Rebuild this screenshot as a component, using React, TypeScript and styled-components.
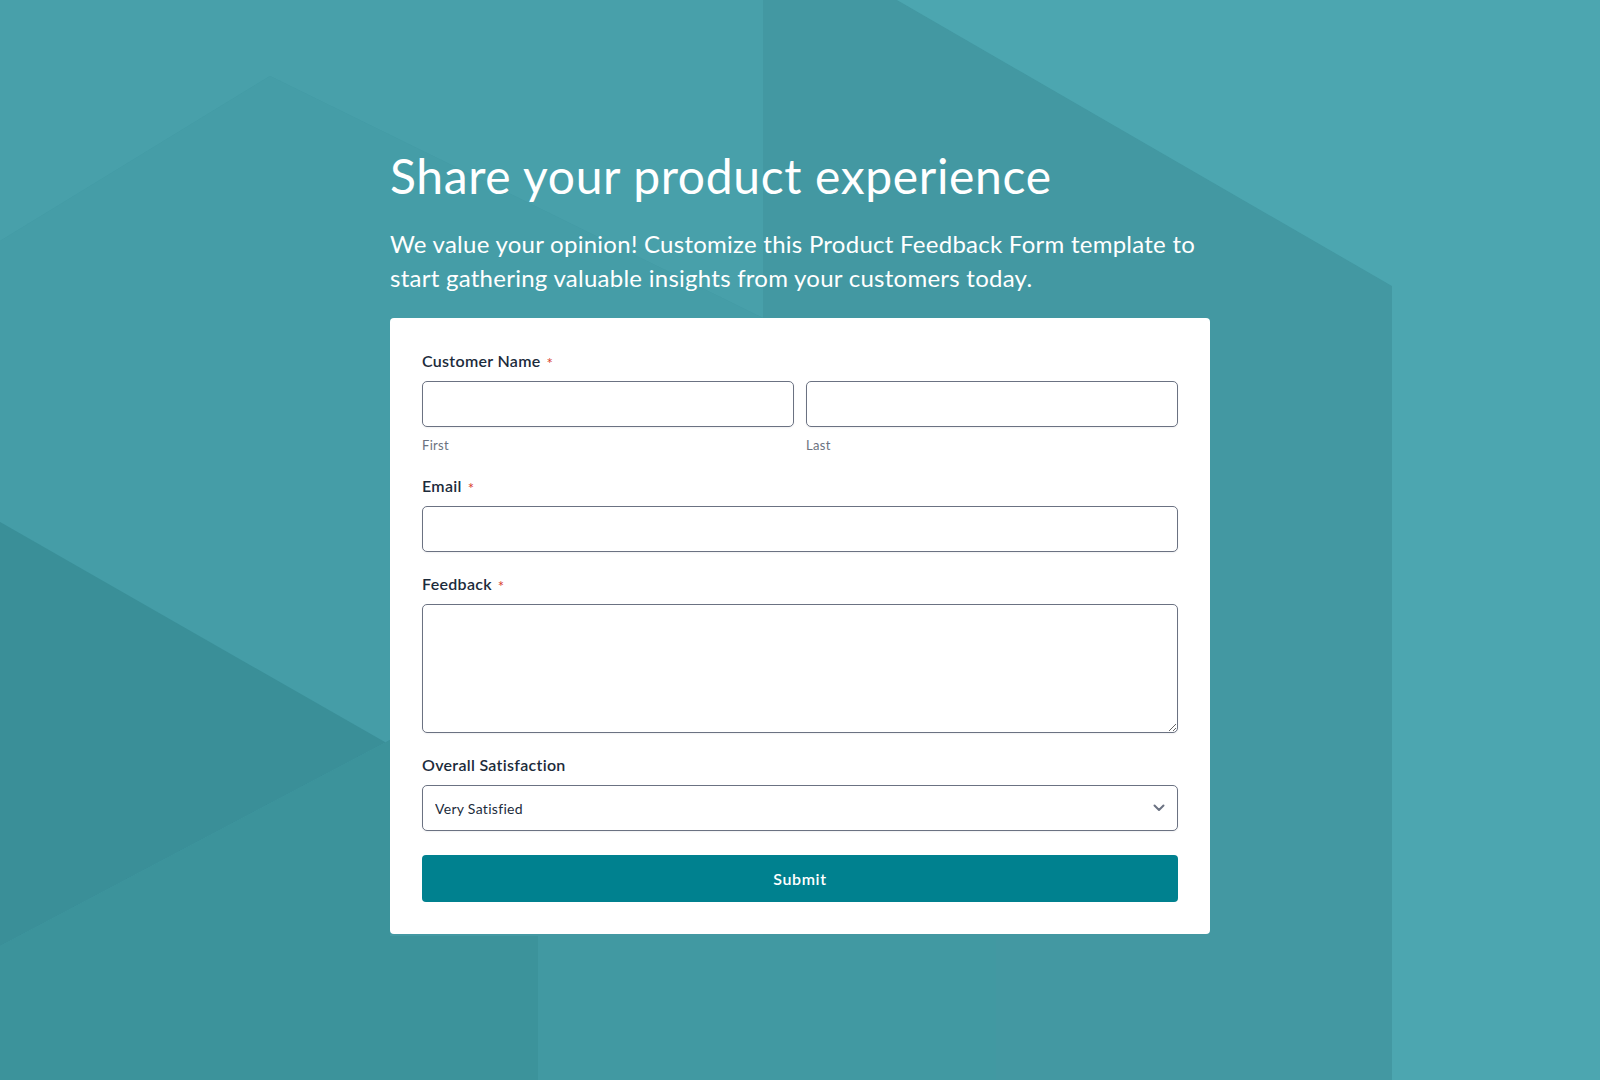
import React from "react";
import styled, { createGlobalStyle } from "styled-components";

const GlobalStyle = createGlobalStyle`
  html, body {
    margin: 0;
    padding: 0;
    background: #4499a3;
  }
  body {
    font-family: Lato, "Open Sans", sans-serif;
    -webkit-font-smoothing: antialiased;
  }
  * { box-sizing: border-box; }
`;

const Page = styled.div`
  position: relative;
  min-height: 1080px;
  width: 100%;
  overflow: hidden;
`;

const Backdrop = styled.svg`
  position: absolute;
  inset: 0;
  width: 100%;
  height: 100%;
  z-index: 0;
`;

const Content = styled.main`
  position: relative;
  z-index: 1;
  width: 820px;
  margin: 0 auto;
  padding-top: 147px;
  display: flex;
  flex-direction: column;
`;

const Title = styled.h1`
  margin: 0;
  font-family: Lato, sans-serif;
  font-weight: 400;
  font-size: 48px;
  line-height: 1.2;
  letter-spacing: 0.65px;
  color: #ffffff;
`;

const Lead = styled.p`
  margin: 22px 0 23px;
  font-family: Lato, sans-serif;
  font-weight: 400;
  font-size: 24px;
  line-height: 34px;
  letter-spacing: 0.26px;
  color: #ffffff;
`;

const Card = styled.form`
  background: #ffffff;
  border-radius: 4px;
  padding: 32px;
  display: flex;
  flex-direction: column;
  gap: 21px;
`;

const Field = styled.div<{ $extra?: number }>`
  display: flex;
  flex-direction: column;
  margin-bottom: ${(p) => p.$extra ?? 0}px;
`;

const Label = styled.label`
  font-family: Lato, sans-serif;
  font-weight: 600;
  font-size: 16px;
  line-height: 22px;
  letter-spacing: 0.3px;
  color: #1c2b3b;
  margin-bottom: 9px;
  display: flex;
  align-items: center;
  gap: 6px;
`;

const Required = styled.span`
  color: #d8402c;
  font-size: 15px;
  font-weight: 400;
  line-height: 1;
  transform: translateY(3px);
`;

const NameRow = styled.div`
  display: grid;
  grid-template-columns: 1fr 1fr;
  column-gap: 12px;
`;

const NamePart = styled.div`
  display: flex;
  flex-direction: column;
`;

const TextInput = styled.input`
  height: 46px;
  width: 100%;
  border: 1px solid #6b7282;
  border-radius: 5px;
  background: #fff;
  box-shadow: 0 1px 2px rgba(16, 24, 40, 0.06);
  padding: 0 12px;
  font-family: Lato, sans-serif;
  font-size: 14px;
  color: #1c2b3b;
  outline: none;
`;

const SubLabel = styled.span`
  margin-top: 10px;
  font-family: Lato, sans-serif;
  font-size: 13px;
  line-height: 16px;
  letter-spacing: 0.3px;
  color: #6b7280;
`;

const TextArea = styled.textarea`
  height: 129px;
  width: 100%;
  border: 1px solid #6b7282;
  border-radius: 5px;
  background: #fff;
  box-shadow: 0 1px 2px rgba(16, 24, 40, 0.06);
  padding: 10px 12px;
  font-family: Lato, sans-serif;
  font-size: 14px;
  color: #1c2b3b;
  resize: vertical;
  outline: none;
  display: block;
`;

const SelectWrap = styled.div`
  position: relative;
`;

const Select = styled.select`
  appearance: none;
  -webkit-appearance: none;
  height: 46px;
  width: 100%;
  border: 1px solid #6b7282;
  border-radius: 5px;
  background: #fff;
  box-shadow: 0 1px 2px rgba(16, 24, 40, 0.06);
  padding: 1px 40px 0 12px;
  font-family: Lato, sans-serif;
  font-size: 14px;
  letter-spacing: 0.3px;
  color: #1c2b3b;
  outline: none;
`;

const Chevron = styled.svg`
  position: absolute;
  right: 13px;
  top: 50%;
  transform: translateY(-50%);
  pointer-events: none;
`;

const Submit = styled.button`
  margin-top: 3px;
  height: 47px;
  border: none;
  border-radius: 4px;
  background: #00818f;
  color: #ffffff;
  font-family: Lato, sans-serif;
  font-weight: 600;
  font-size: 16px;
  letter-spacing: 0.6px;
  cursor: pointer;
`;

function Background() {
  return (
    <Backdrop viewBox="0 0 1600 1080" preserveAspectRatio="none" aria-hidden="true">
      <rect x="0" y="0" width="1600" height="1080" fill="#4399a3" />
      {/* top-left lighter facet */}
      <polygon points="0,0 763,0 763,318 270,76 0,241" fill="#48a0aa" />
      {/* middle band under apex */}
      <polygon points="0,241 270,76 763,318 390,318 390,745 0,522" fill="#459da7" />
      {/* centre column */}
      <polygon points="763,0 897,0 1392,286 1392,1080 996,1080 996,936 763,936" fill="#4398a2" />
      {/* top-right light facet */}
      <polygon points="897,0 1600,0 1600,1080 1392,1080 1392,286" fill="#4ca6b0" />
      {/* dark lower-left wedge */}
      <polygon points="0,522 390,745 390,740 0,946" fill="#3a8f98" />
      <polygon points="0,946 390,740 390,1080 0,1080" fill="#3c939b" />
      <polygon points="390,936 538,936 538,1080 390,1080" fill="#3c939b" />
      <polygon points="538,936 996,936 996,1080 538,1080" fill="#4199a2" />
    </Backdrop>
  );
}

export default function App() {
  return (
    <>
      <GlobalStyle />
      <Page>
        <Background />
        <Content>
          <Title>Share your product experience</Title>
          <Lead>
            We value your opinion! Customize this Product Feedback Form template to start
            gathering valuable insights from your customers today.
          </Lead>
          <Card onSubmit={(e) => e.preventDefault()}>
            <Field $extra={1}>
              <Label>
                Customer Name <Required>*</Required>
              </Label>
              <NameRow>
                <NamePart>
                  <TextInput type="text" aria-label="First" />
                  <SubLabel>First</SubLabel>
                </NamePart>
                <NamePart>
                  <TextInput type="text" aria-label="Last" />
                  <SubLabel>Last</SubLabel>
                </NamePart>
              </NameRow>
            </Field>
            <Field>
              <Label htmlFor="email">
                Email <Required>*</Required>
              </Label>
              <TextInput id="email" type="email" />
            </Field>
            <Field>
              <Label htmlFor="feedback">
                Feedback <Required>*</Required>
              </Label>
              <TextArea id="feedback" />
            </Field>
            <Field>
              <Label htmlFor="satisfaction">Overall Satisfaction</Label>
              <SelectWrap>
                <Select id="satisfaction" defaultValue="Very Satisfied">
                  <option>Very Satisfied</option>
                  <option>Satisfied</option>
                  <option>Neutral</option>
                  <option>Dissatisfied</option>
                  <option>Very Dissatisfied</option>
                </Select>
                <Chevron width="12" height="8" viewBox="0 0 12 8">
                  <path d="M1.5 1.5 L6 6 L10.5 1.5" fill="none" stroke="#6b7282" strokeWidth="2" strokeLinecap="round" strokeLinejoin="round" />
                </Chevron>
              </SelectWrap>
            </Field>
            <Submit type="submit">Submit</Submit>
          </Card>
        </Content>
      </Page>
    </>
  );
}
